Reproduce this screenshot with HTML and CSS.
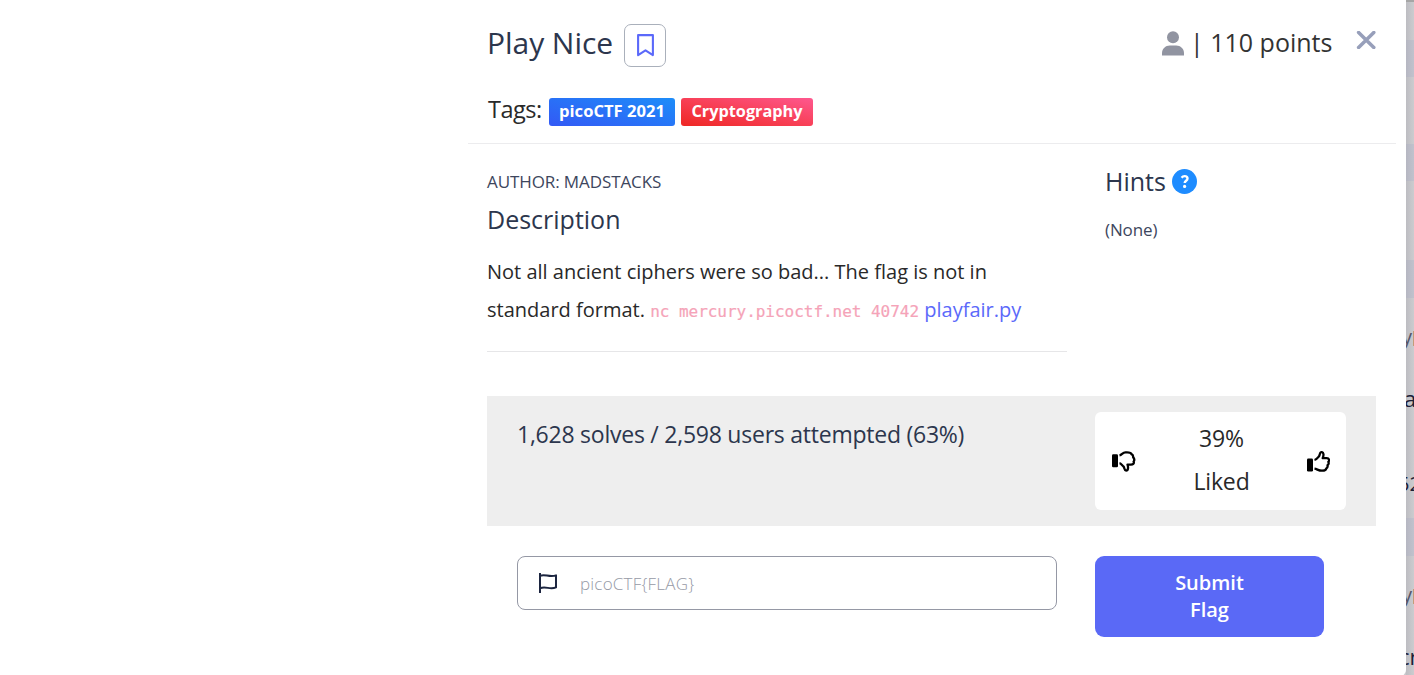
FILE: index.html
```html
<!DOCTYPE html>
<html lang="en">
<head>
<meta charset="utf-8">
<title>Play Nice</title>
<link rel="stylesheet" href="styles.css">
</head>
<body>
<div class="screen">
  <main class="modal">
    <header class="head">
      <div class="title-row">
        <h1 class="title">Play Nice</h1>
        <button class="bookmark" aria-label="Bookmark">
          <svg width="17" height="23" viewBox="0 0 17 23"><path d="M1.1 1.1h14.8v20L8.5 16.3l-7.4 4.8z" fill="none" stroke="#5b69fa" stroke-width="2.1" stroke-linejoin="round"/></svg>
        </button>
        <div class="points">
          <svg width="22" height="25" viewBox="0 0 22 25" fill="#9194a1"><circle cx="11" cy="6.3" r="6"/><path d="M0 24.5v-2.3c0-4.4 3.5-7.6 7.8-7.6h6.4c4.3 0 7.8 3.2 7.8 7.6v2.3z"/></svg>
          <span class="points-text">| 110 points</span>
        </div>
        <button class="close" aria-label="Close">
          <svg width="20" height="18" viewBox="0 0 20 18"><path d="M2.6 1.4l15.2 15.2M17.8 1.4l-15.2 15.2" stroke="#979fba" stroke-width="3.5" stroke-linecap="round"/></svg>
        </button>
      </div>
      <div class="tags"><span class="tags-label">Tags:</span><span class="badge blue">picoCTF 2021</span><span class="badge red">Cryptography</span></div>
    </header>
    <section class="body">
      <div class="main-col">
        <div class="author">AUTHOR: MADSTACKS</div>
        <h2 class="sub">Description</h2>
        <p class="desc">Not all ancient ciphers were so bad... The flag is not in<br>standard format. <code>nc mercury.picoctf.net 40742</code> <a class="link">playfair.py</a></p>
      </div>
      <aside class="hints">
        <h2 class="sub hint-title">Hints <svg width="25" height="25" viewBox="0 0 25 25"><circle cx="12.5" cy="12.5" r="12.5" fill="#1e8cff"/><path d="M9.6 8.7c.8-1.1 1.7-1.6 3-1.6 1.7 0 2.9.9 2.9 2.4 0 2.3-2.8 2.2-2.8 4.6" fill="none" stroke="#fff" stroke-width="2.4"/><circle cx="12.6" cy="17.4" r="1.6" fill="#fff"/></svg></h2>
        <div class="none">(None)</div>
      </aside>
    </section>
    <section class="stats">
      <div class="solves">1,628 solves / 2,598 users attempted (63%)</div>
      <div class="likes">
        <svg width="24" height="21" viewBox="0 0 24 21"><rect x="0" y="3.3" width="6" height="13" rx="1.2"/><path d="M7.5 4.4c2.5-.4 3-2.8 6-3 3.2-.2 5.6.1 6 1.7 1.8.9 1.7 2.4 1.6 3 1.6 1.7 1.3 3.4.5 4.5.9 2.2-.8 3-2.6 3h-3.5c.8 2.2 1 6-1.4 6-2.1 0-1.3-2.8-2.7-4.2-1.2-1-2.4-3-3.9-3.2" fill="none" stroke="#000" stroke-width="2.3" stroke-linejoin="round"/></svg>
        <div class="liked"><span>39%</span><span>Liked</span></div>
        <svg width="23" height="21" viewBox="0 0 23 21"><rect x="0" y="7.5" width="6" height="13" rx="1.2"/><path d="M7.5 9c2.3-.5 3.500-2.500 4.500-3.700 1-1.200.4-4.200 2.500-4.200 2.500 0 2.300 3.600 1.200 6.100h4.100c2.500 0 2.900 2.400 1.500 3.600.8 1.600.3 2.700-.8 3.500.4 1.500-.2 2.500-1.200 3.100-.2 2-1.600 2.300-4.300 2.300-3.700 0-4.800-1.700-7.500-2" fill="none" stroke="#000" stroke-width="2.3" stroke-linejoin="round"/></svg>
      </div>
    </section>
    <section class="submit-row">
      <div class="field">
        <svg width="18" height="20" viewBox="0 0 18 20" fill="none" stroke="#1c2540" stroke-width="2"><path d="M1 0v20M1 2.8c5-2.4 9 2 16-.4v12c-6 2.6-10-1.5-16 .8" stroke-linejoin="round"/></svg>
        <span class="placeholder">picoCTF{FLAG}</span>
      </div>
      <button class="submit"><span>Submit</span><span>Flag</span></button>
    </section>
  </main>
  <aside class="backdrop">
    <div class="stripe s-a"></div>
    <div class="stripe s-b"></div>
    <div class="stripe s-c"></div>
    <div class="peek tag-text">y<i></i></div>
    <div class="peek name-text">a</div>
    <div class="peek count-text">52</div>
    <div class="stripe s-d"></div>
    <div class="peek tag-text low">y<i></i></div>
    <div class="peek last-text">cr</div>
  </aside>
</div>
</body>
</html>
```
FILE: styles.css
```css
* { box-sizing: border-box; }
body { margin: 0; font-family: "Open Sans", sans-serif; color: #292929; background: #c8c8cc; overflow: hidden; }
h1, h2, p { margin: 0; font-weight: 400; }
button { font: inherit; border: 0; background: none; padding: 0; }
svg { display: block; flex: none; }
.screen { display: flex; width: 1414px; height: 675px; overflow: hidden; }
.modal { width: 1406px; height: 676px; flex: none; background: #fff; border-bottom-right-radius: 6px; padding-left: 468px; white-space: nowrap; }

.head { width: 928px; height: 144px; padding: 24px 19px 0; border-bottom: 1px solid #ececee; }
.title-row { display: flex; width: 889px; height: 44px; }
.title { width: 137px; font-size: 30px; line-height: 38px; letter-spacing: -0.05px; color: #2c364d; }
.bookmark { width: 42px; height: 43px; border: 1px solid #aab0bb; border-radius: 7px; display: flex; justify-content: center; padding-top: 9px; }
.points { display: flex; margin-left: auto; padding-top: 7px; gap: 9px; }
.points-text { width: 140px; font-size: 25px; line-height: 22px; color: #333; text-indent: -3px; }
.close { width: 20px; margin-left: 23px; padding: 7px 0 0; align-self: flex-start; }
.tags { display: flex; margin-top: 30px; align-items: flex-start; }
.tags-label { width: 62px; padding-left: 1px; margin-top: -1px; font-size: 23.5px; letter-spacing: -0.5px; line-height: 24px; }
.badge { height: 28px; border-radius: 3px; color: #fff; font-size: 16.6px; font-weight: 700; line-height: 26px; text-align: center; }
.blue { width: 126px; margin-right: 6px; background: linear-gradient(15deg, #3359f5, #1d8df9); }
.red { width: 132px; font-size: 16.3px; background: linear-gradient(to top right, #ee2723, #f84057 50%, #fe588f); }

.body { display: flex; height: 252px; padding-left: 19px; }
.main-col { width: 580px; height: 208px; padding-top: 26px; border-bottom: 1px solid #e6e6e8; }
.author { height: 24px; font-size: 17px; letter-spacing: -0.1px; line-height: 24px; color: #3d465d; }
.sub { font-size: 25px; line-height: 36px; color: #2c364d; }
.main-col .sub { margin-top: 7px; }
.desc { margin-top: 16px; font-size: 20px; line-height: 38px; }
code { font: 16px/20px "DejaVu Sans Mono", monospace; color: #f5a3b8; -webkit-text-stroke: 0.2px #f5a3b8; letter-spacing: -0.03px; }
.link { color: #5b69fa; }
.hints { margin-left: 38px; padding-top: 19px; }
.hint-title { display: flex; align-items: center; gap: 6px; }
.none { margin-top: 19px; font-size: 17px; letter-spacing: -0.1px; line-height: 24px; color: #3d465d; }

.stats { display: flex; justify-content: space-between; width: 889px; height: 130px; margin-left: 19px; padding: 16px 30px; background: #eee; }
.solves { font-size: 23px; letter-spacing: -0.24px; line-height: 44px; color: #2c364d; }
.likes { display: flex; align-items: center; justify-content: space-between; width: 251px; height: 98px; padding: 0 16px 0 17px; border-radius: 6px; background: #fff; }
.liked { display: flex; flex-direction: column; align-items: center; height: 88px; font-size: 23px; letter-spacing: -0.15px; line-height: 43px; }

.submit-row { display: flex; padding: 30px 0 0 49px; }
.field { display: flex; align-items: center; width: 540px; height: 54px; padding-left: 21px; gap: 23px; border: 1px solid #9598a5; border-radius: 8px; }
.placeholder { font-size: 17px; font-weight: 300; letter-spacing: 0.2px; color: #969aa6; }
.submit { display: flex; flex-direction: column; align-items: center; width: 229px; height: 81px; margin-left: 38px; padding-top: 13px; border-radius: 9px; background: #5a69f6; color: #fff; font-size: 20px; font-weight: 600; line-height: 27px; }

.backdrop { width: 8px; height: 675px; overflow: hidden; border-top: 2px solid #a6a6a6; background: linear-gradient(90deg, #bdbdc2, #cccccf); }
.stripe { background: linear-gradient(90deg, #b6b7c2, #c1c2cd); }
.s-a { height: 37px; margin-top: 38px; }
.s-b { height: 37px; margin-top: 67px; }
.s-c { height: 38px; margin-top: 79px; }
.s-d { height: 38px; }
.peek { display: flex; margin-left: -2px; font-size: 22px; line-height: 30px; color: #1c2038; }
.tag-text { margin-top: 24px; height: 36px; margin-left: -4px; font-size: 20px; color: #555568; }
.tag-text i { width: 2px; height: 15px; margin: 9px 0 0 1px; background: #c59b78; }
.name-text { height: 60px; padding-top: 25px; }
.count-text { height: 100px; padding-top: 51px; margin-left: -8px; font-size: 20px; }
.tag-text.low { height: 37px; }
.last-text { padding-top: 24px; margin-left: -7px; }
```
